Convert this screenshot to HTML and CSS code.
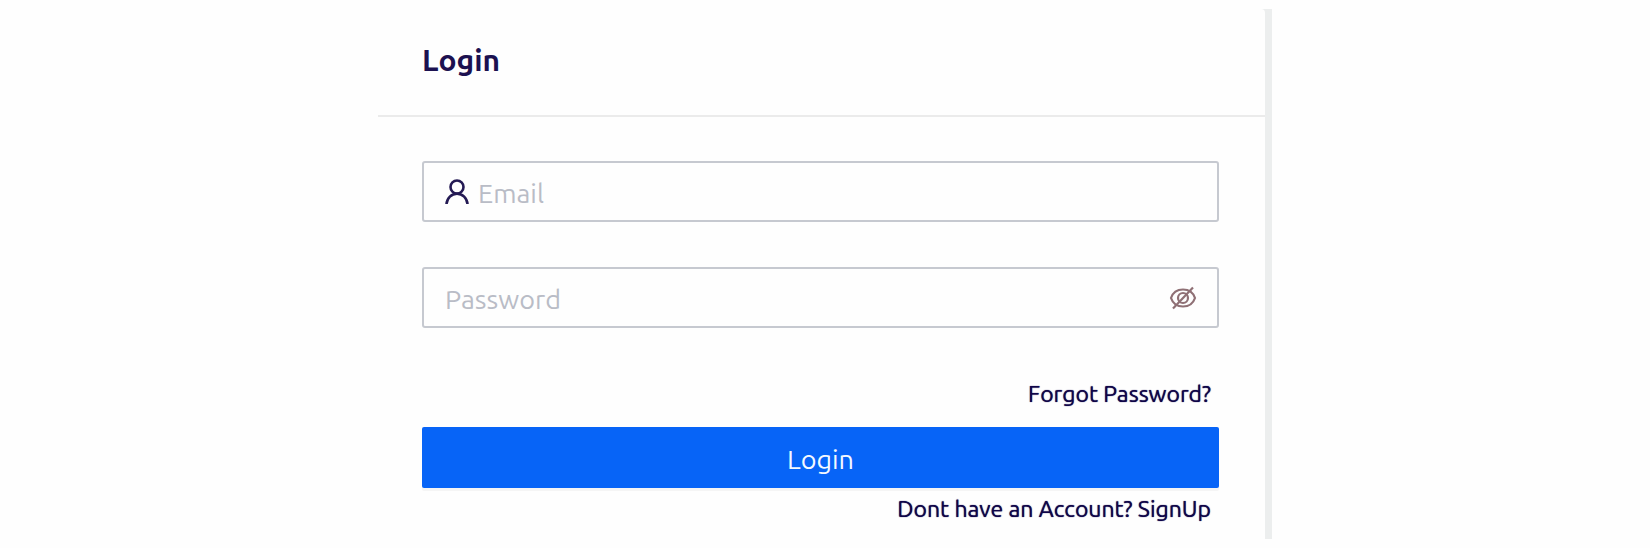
FILE: index.html
```html
<!DOCTYPE html>
<html lang="en">
<head>
<meta charset="utf-8">
<meta name="viewport" content="width=device-width, initial-scale=1">
<title>Login</title>
<link rel="stylesheet" href="styles.css">
</head>
<body>
<main class="panel">
  <section class="card">
    <header class="card-header"><h1 class="card-title">Login</h1></header>
    <form class="form">
      <div class="field">
        <svg class="icon-user" viewBox="0 0 24 26" aria-hidden="true"><circle cx="12" cy="8" r="6.500"/><path d="M1.500 25C2 19 6.500 14.700 12 14.700S22 19 22.500 25"/></svg>
        <input class="input" type="email" placeholder="Email" aria-label="Email">
      </div>
      <div class="field">
        <input class="input" type="password" placeholder="Password" aria-label="Password">
        <button class="toggle" type="button" aria-label="Show password">
          <svg class="icon-eye" viewBox="0 0 28 24" aria-hidden="true"><path d="M2 12C4 6 8 3.500 14 3.500S24 6 26 12C24 18 20 20.500 14 20.500S4 18 2 12Z"/><circle cx="14" cy="12" r="5"/><path d="M4 22.500L24 1.500"/></svg>
        </button>
      </div>
      <a class="link" href="#forgot">Forgot Password?</a>
      <button class="submit" type="submit">Login</button>
      <a class="link" href="#signup">Dont have an Account? SignUp</a>
    </form>
  </section>
</main>
</body>
</html>
```
FILE: styles.css
```css
* {
  box-sizing: border-box;
}

body {
  margin: 0;
  padding: 9px 16px;
  background: #fefefe;
  color: #1c1150;
  font-family: Ubuntu, "Noto Sans", sans-serif;
}

.panel {
  max-width: 894px;
  margin: 0 auto;
  padding-right: 7px;
  background: #eceeee;
}

.card {
  background: #fefefe;
  border-radius: 0 4px 0 0;
}

.card-header {
  padding: 30px 44px 34px;
  border-bottom: 2px solid #ebebeb;
}

.card-title {
  margin: 0;
  font-size: 30px;
  line-height: 42px;
  font-weight: 700;
}

.form {
  display: flex;
  flex-direction: column;
  padding: 44px 46px 10px 44px;
}

.field {
  display: flex;
  align-items: center;
  gap: 9px;
  height: 61px;
  margin-bottom: 45px;
  padding: 0 20px 0 21px;
  border: 2px solid #c6c9d0;
  border-radius: 3px;
}

.input {
  flex: 1;
  min-width: 0;
  padding: 2px 0 0;
  border: 0;
  outline: 0;
  background: transparent;
  color: inherit;
  font: inherit;
  font-size: 27px;
  line-height: 40px;
}

.input::placeholder {
  color: #b9bcc6;
  opacity: 1;
}

.icon-user {
  width: 24px;
  height: 26px;
  fill: none;
  stroke: #241a54;
  stroke-width: 2.6;
}

.toggle {
  display: flex;
  padding: 0;
  border: 0;
  background: transparent;
  cursor: pointer;
}

.icon-eye {
  width: 28px;
  height: 24px;
  fill: none;
  stroke: #8f7075;
  stroke-width: 2.2;
}

.link {
  align-self: flex-end;
  padding: 1px 8px 0 0;
  color: #0f0548;
  font-size: 23px;
  line-height: 40px;
  text-shadow: 0 0 1px #0f0548;
  text-decoration: none;
}

.submit {
  height: 61px;
  margin-top: 13px;
  padding: 2px 0 0;
  border: 0;
  border-radius: 2px;
  background: #0764f7;
  box-shadow: 0 3px 0 #f5f5f5;
  color: #f4f8ff;
  font: inherit;
  font-size: 27px;
  cursor: pointer;
}
```
